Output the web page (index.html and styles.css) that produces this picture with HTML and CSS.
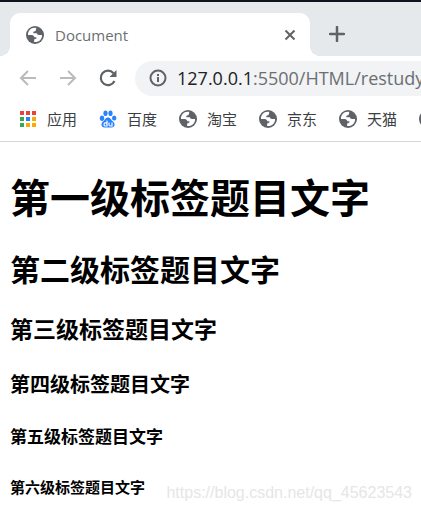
FILE: index.html
```html
<!DOCTYPE html>
<html lang="zh-CN">
<head>
<meta charset="utf-8">
<title>Document</title>
<link rel="stylesheet" href="styles.css">
</head>
<body>
<svg class="symbols" aria-hidden="true">
  <symbol id="globe" viewBox="0 0 54 54">
    <circle cx="27" cy="27" r="27" fill="#5f6368"/>
    <path d="M31 6C16 3 5 14 6 27L17 27C22 27 25 30 25 34L31 34L31 38L25 40L24 48C38 50 49 40 48 27L39 27C35 27 33 25 33 22L22 22L22 17L27 16C31 14 29 10 31 6Z" fill="#fff"/>
  </symbol>
</svg>
<header class="browser">
  <div class="tabstrip">
    <div class="tab">
      <svg class="globe"><use href="#globe"/></svg>
      <span class="tab-title">Document</span>
      <button class="icon-button" aria-label="关闭标签页"><svg width="12" height="12" viewBox="0 0 12 12"><path d="M1.500 1.500L10.500 10.500M10.500 1.500L1.500 10.500" stroke="#5f6368" stroke-width="2"/></svg></button>
    </div>
    <button class="icon-button new-tab" aria-label="新标签页"><svg width="16" height="16" viewBox="0 0 16 16"><path d="M8 1V15M1 8H15" stroke="#5f6368" stroke-width="2.500" stroke-linecap="round"/></svg></button>
  </div>
  <div class="toolbar">
    <button class="icon-button" aria-label="后退"><svg width="18" height="18" viewBox="0 0 18 18"><path d="M17 9H2M9 2L2 9L9 16" fill="none" stroke="#b9bbbd" stroke-width="2"/></svg></button>
    <button class="icon-button" aria-label="前进"><svg width="18" height="18" viewBox="0 0 18 18"><path d="M1 9H16M9 2L16 9L9 16" fill="none" stroke="#b9bbbd" stroke-width="2"/></svg></button>
    <button class="icon-button" aria-label="刷新"><svg width="18" height="18" viewBox="0 0 18 18"><path d="M15.500 12A7.200 7.200 0 1 1 14.500 4.200" fill="none" stroke="#5f6368" stroke-width="2.200"/><path d="M17.500 1V8H10.500Z" fill="#5f6368"/></svg></button>
    <div class="address">
      <svg width="18" height="18" viewBox="0 0 18 18"><circle cx="9" cy="9" r="7.500" fill="none" stroke="#5f6368" stroke-width="2"/><path d="M9 8V13M9 5V7" stroke="#5f6368" stroke-width="2"/></svg>
      <span class="url"><span class="host">127.0.0.1</span>:5500/HTML/restudy</span>
    </div>
  </div>
  <nav class="bookmarks">
    <a href="#"><svg width="18" height="18" viewBox="0 0 18 18"><path d="M1 1h4v4H1zM7 1h4v4H7zM13 1h4v4h-4z" fill="#ea4335"/><path d="M1 7h4v4H1zM1 13h4v4H1z" fill="#34a853"/><path d="M7 7h4v4H7z" fill="#1a88f5"/><path d="M13 7h4v4h-4zM7 13h4v4H7zM13 13h4v4h-4z" fill="#fbaa05"/></svg>应用</a>
    <a href="#"><svg width="18" height="18" viewBox="0 0 18 18"><g fill="#2b82fb"><ellipse cx="3" cy="8.200" rx="2.200" ry="2.700"/><ellipse cx="6.500" cy="3.300" rx="2.100" ry="2.800"/><ellipse cx="11.500" cy="3.300" rx="2.100" ry="2.800"/><ellipse cx="15.200" cy="8" rx="2.200" ry="2.600"/><path d="M9 7.500C11.500 7.500 12 10 14 11.500C16.500 13.500 16 17.500 12.500 17.500H5.500C2 17.500 1.500 13.500 4 11.500C6 10 6.500 7.500 9 7.500Z"/></g><path d="M8 10.500V16H6.500C4.500 16 4.500 12.800 6.500 12.800H8M10 12.500V14.500Q10 16 11.500 16H13V12.500" fill="none" stroke="#fff" stroke-width="1.200"/></svg>百度</a>
    <a href="#"><svg class="globe"><use href="#globe"/></svg>淘宝</a>
    <a href="#"><svg class="globe"><use href="#globe"/></svg>京东</a>
    <a href="#"><svg class="globe"><use href="#globe"/></svg>天猫</a>
    <a href="#" aria-label="书签"><svg class="globe"><use href="#globe"/></svg></a>
  </nav>
</header>
<main>
  <h1>第一级标签题目文字</h1>
  <h2>第二级标签题目文字</h2>
  <h3>第三级标签题目文字</h3>
  <h4>第四级标签题目文字</h4>
  <h5>第五级标签题目文字</h5>
  <h6>第六级标签题目文字</h6>
</main>
<div class="watermark">https://blog.csdn.net/qq_45623543</div>
</body>
</html>
```
FILE: styles.css
```css
* { box-sizing: border-box; }
body {
  margin: 0;
  background: #fff;
  color: #000;
  font-family: "Open Sans", "Noto Sans CJK SC", sans-serif;
  overflow: hidden;
}
svg { display: block; flex: none; }
.symbols { position: absolute; width: 0; height: 0; }
.globe { width: 18px; height: 18px; }
.browser { border-bottom: 1px solid #d5d7d9; }
.tabstrip {
  display: flex;
  align-items: flex-end;
  height: 56px;
  padding: 0 10px;
  border-top: 2px solid #10131d;
  background: #e5e9ec;
}
.tab {
  position: relative;
  display: flex;
  align-items: center;
  width: 300px;
  height: 43px;
  padding: 0 14px 0 16px;
  border-radius: 10px 10px 0 0;
  background: #fff;
}
.tab::before, .tab::after {
  content: "";
  position: absolute;
  bottom: 0;
  width: 10px;
  height: 10px;
}
.tab::before { right: 100%; background: radial-gradient(circle at 0 0, #e5e9ec 10px, #fff 10px); }
.tab::after { left: 100%; background: radial-gradient(circle at 100% 0, #e5e9ec 10px, #fff 10px); }
.tab-title { flex: 1; margin-left: 11px; font-size: 15px; line-height: 20px; color: #6b6f73; }
.icon-button { display: block; padding: 0; border: 0; background: none; }
.new-tab { margin: 0 0 14px 19px; }
.toolbar {
  display: flex;
  align-items: center;
  gap: 22px;
  height: 44px;
  padding-left: 19px;
}
.address {
  display: flex;
  flex: 1;
  align-items: center;
  gap: 10px;
  min-width: 0;
  height: 35px;
  margin-left: -4px;
  padding-left: 14px;
  border-radius: 18px 0 0 18px;
  background: #f1f3f4;
}
.url { font-size: 18px; line-height: 24px; color: #6b6f73; white-space: nowrap; }
.host { color: #202124; }
.bookmarks {
  display: flex;
  gap: 22px;
  height: 41px;
  padding: 0 0 3px 19px;
  overflow: hidden;
}
.bookmarks a {
  display: flex;
  flex: none;
  align-items: center;
  gap: 10px;
  color: #3c4043;
  font-size: 15px;
  line-height: 20px;
  text-decoration: none;
}
main { padding: 28px 10px 0; font-family: "Noto Sans CJK SC", sans-serif; }
h1, h2, h3, h4, h5, h6 { margin: 0; font-weight: 700; }
h1 { font-size: 40px; line-height: 52px; }
h2 { margin-top: 26px; font-size: 30px; line-height: 40px; }
h3 { margin-top: 25px; font-size: 23px; line-height: 30px; }
h4 { margin-top: 27px; font-size: 20px; line-height: 28px; }
h5 { margin-top: 26px; font-size: 17px; line-height: 24px; }
h6 { margin-top: 28px; font-size: 15px; line-height: 22px; }
.watermark {
  position: absolute;
  right: 9px;
  bottom: 8px;
  color: #e6e6e6;
  font-family: "Liberation Sans", sans-serif;
  font-size: 16px;
  line-height: 20px;
}
```
